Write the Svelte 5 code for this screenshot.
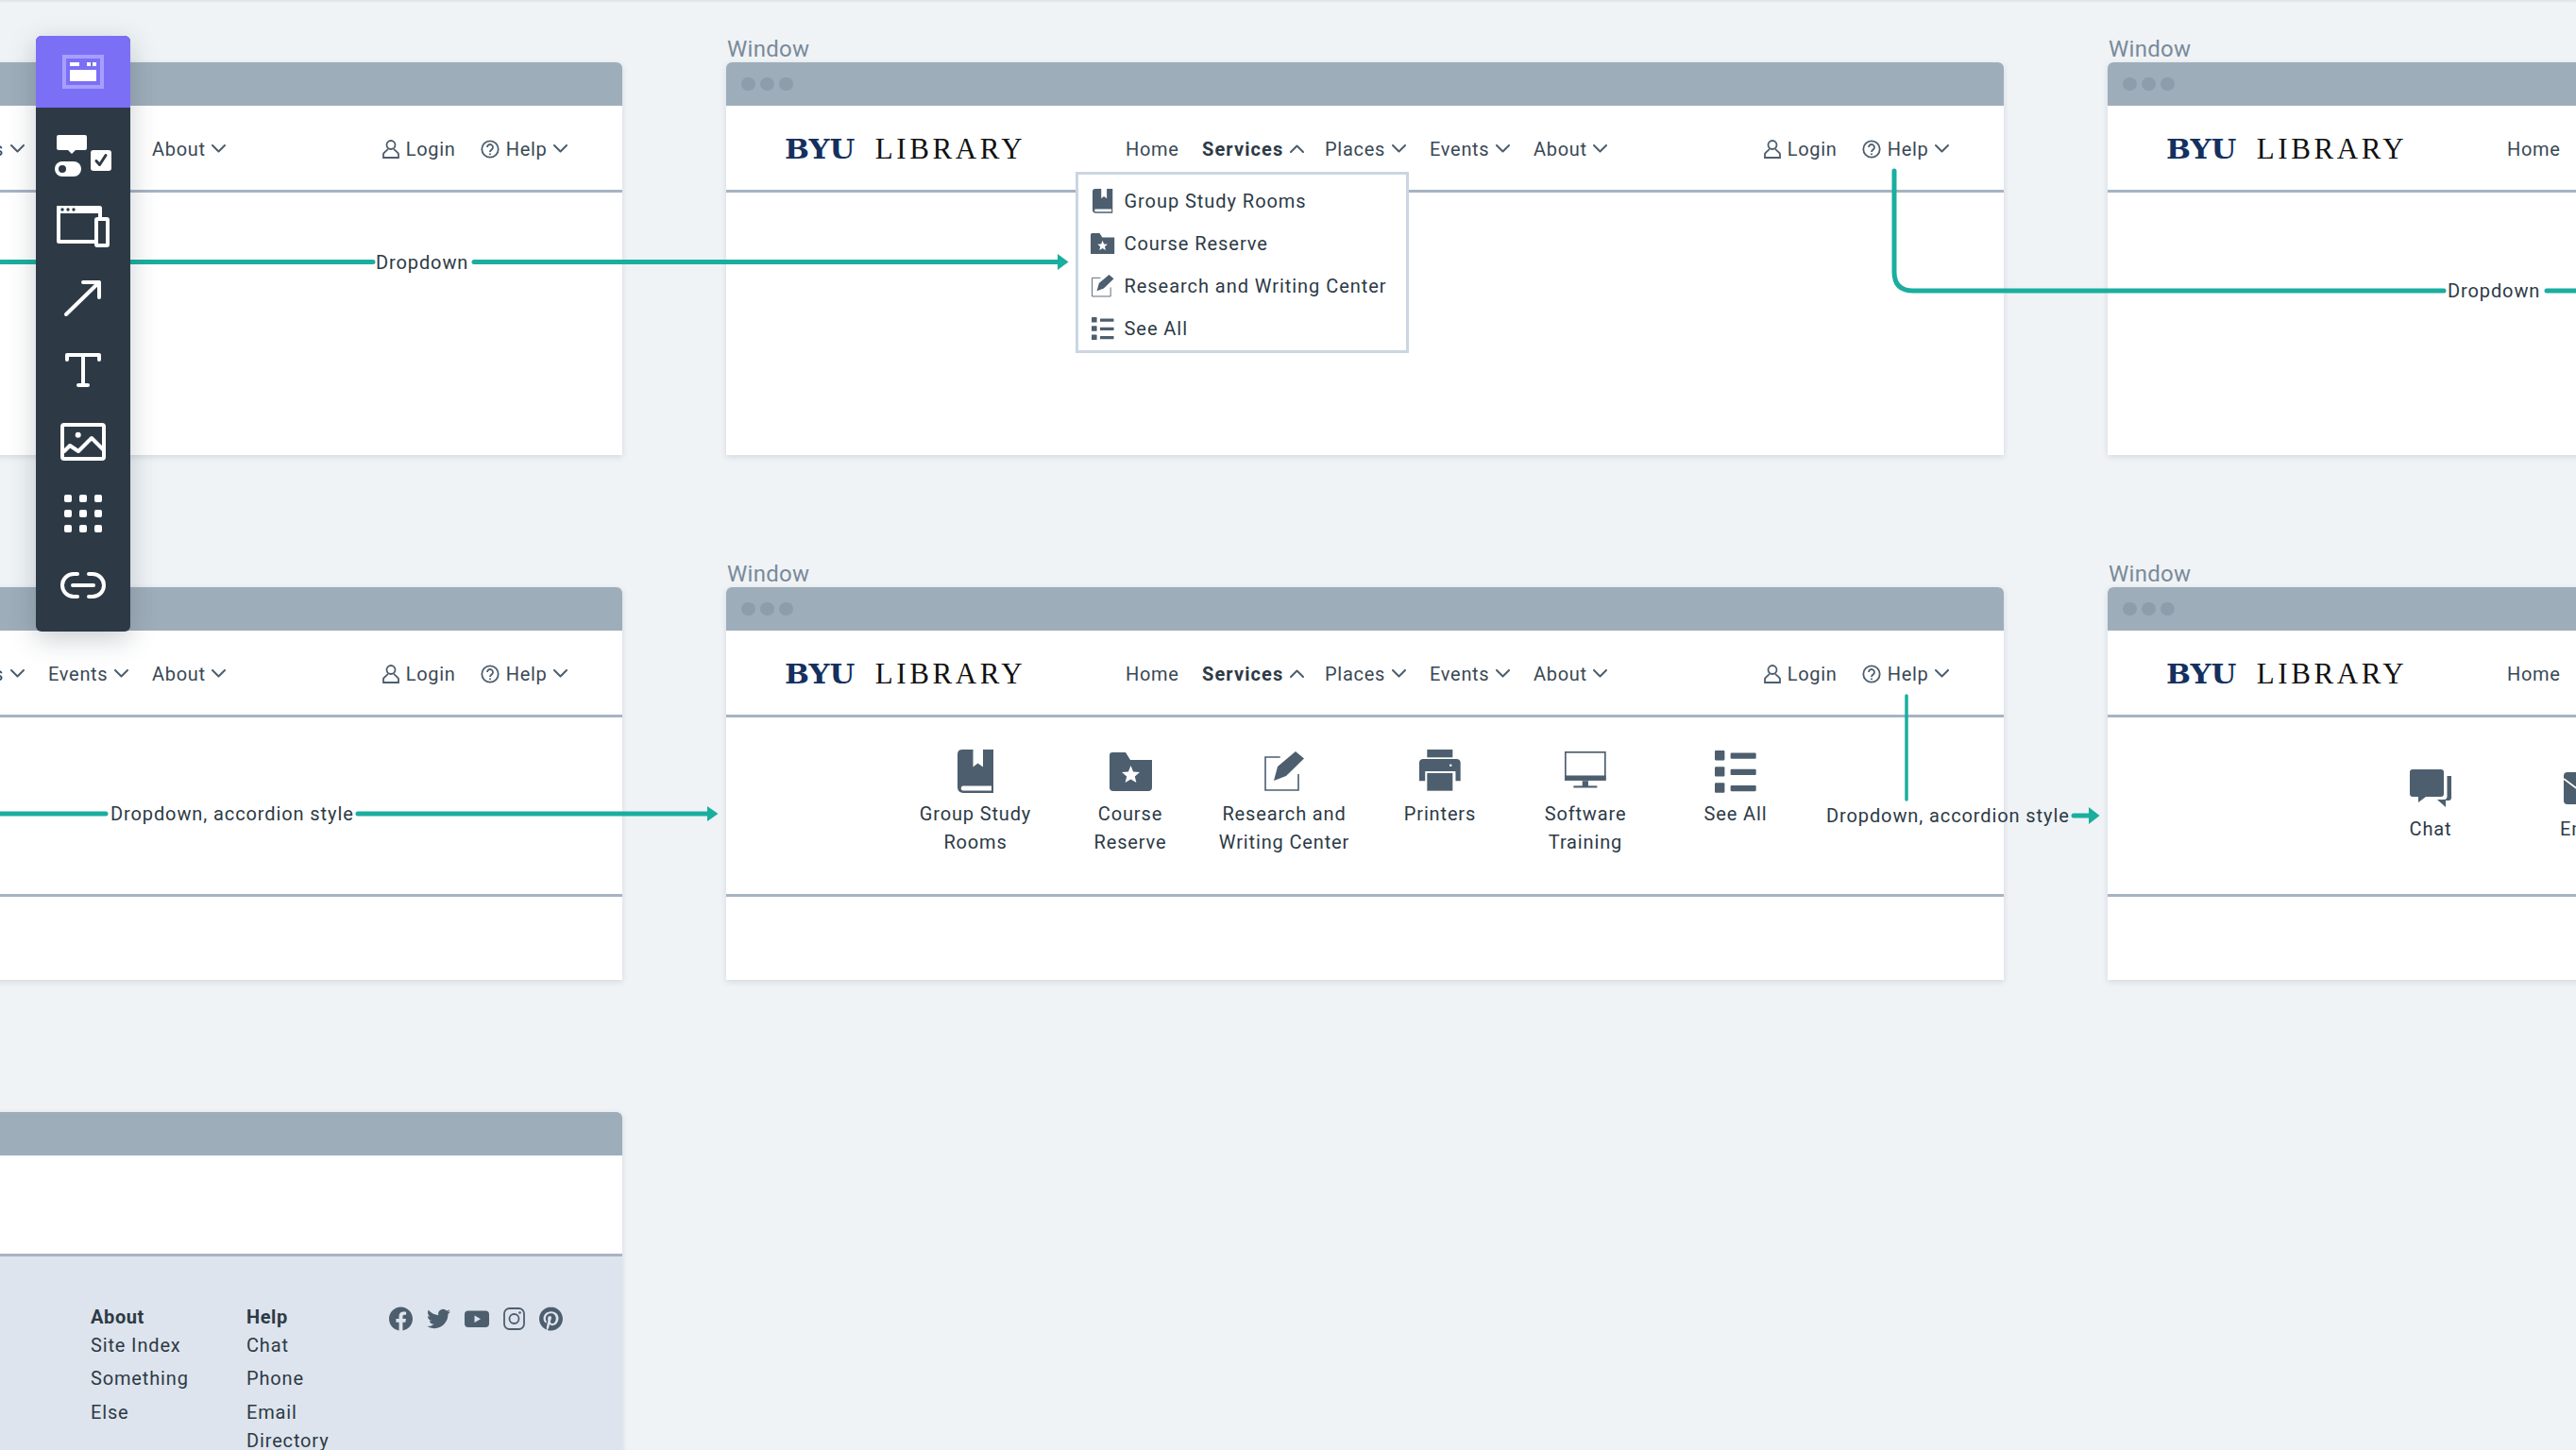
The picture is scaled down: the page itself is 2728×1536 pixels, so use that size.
<script>
  const toolBtns = ['controls', 'device', 'arrow', 'text', 'image', 'grid', 'link'];
  const fullMenu = [
    { icon: 'book', top: 0, s: 1, lines: ['Group Study', 'Rooms'], label: 'Group Study Rooms' },
    { icon: 'folder', top: 3, s: 1, lines: ['Course', 'Reserve'], label: 'Course Reserve' },
    { icon: 'edit', top: 2, s: 1, lines: ['Research and', 'Writing Center'], label: 'Research and Writing Center' },
    { icon: 'printer', top: 0, s: 1.04, lines: ['Printers'] },
    { icon: 'monitor', top: 2, s: 1.04, lines: ['Software', 'Training'] },
    { icon: 'list', top: 1, s: 1.04, lines: ['See All'], label: 'See All' }
  ];
  const dropItems = fullMenu.filter((m) => m.label);
  const sizes = {
    book: [38, 46], folder: [45, 41], edit: [42, 42], printer: [42, 42], monitor: [42, 38], list: [42, 43],
    chat: [44, 40], mail: [46, 34]
  };
  const windows = [
    { x: -694, y: 66, kind: 'plain' },
    { x: 769, y: 66, kind: 'drop', active: true, label: true },
    { x: 2232, y: 66, kind: 'plain', label: true },
    { x: -694, y: 622, kind: 'panelEmpty', active: true },
    { x: 769, y: 622, kind: 'panel', active: true, label: true },
    { x: 2232, y: 622, kind: 'help', label: true }
  ];
  const footCols = [
    { title: 'About', links: ['Site Index', 'Something', 'Else'] },
    { title: 'Help', links: ['Chat', 'Phone', 'Email', 'Directory'] }
  ];
</script>

{#snippet icon(name, scale = 1)}
  <svg class="ico" width={sizes[name][0] * scale} height={sizes[name][1] * scale} viewBox="0 0 {sizes[name][0]} {sizes[name][1]}">
    {#if name === 'book'}
      <path d="M5 0H16.5V18.5L21.5 14.5L27 18.5V0H38V46H6C2 46 0 43 0 40V5C0 2 2 0 5 0Z" />
      <path class="cut" d="M6 38.5H36V43.5H6C3 43.5 3 38.5 6 38.5Z" />
    {:else if name === 'folder'}
      <path d="M3 0H17L22 8H45V37a4 4 0 0 1-4 4H4a4 4 0 0 1-4-4V3a3 3 0 0 1 3-3Z" />
      <polygon class="cut" points="22.5,14 25.1,20.4 32,21 26.8,25.4 28.4,32 22.5,28.4 16.6,32 18.2,25.4 13,21 19.9,20.4" />
    {:else if name === 'edit'}
      <path class="line" d="M16.7 6H1V41H36V24" />
      <polygon points="10,31 14,16 33,0 42,7.5 23,26" />
    {:else if name === 'printer'}
      <rect x="8" width="26" height="8" />
      <path d="M4 9.5H38a4 4 0 0 1 4 4V32H37V22H6V32H0V13.5a4 4 0 0 1 4-4Z" />
      <rect x="8" y="24" width="26" height="18" />
      <circle class="cut" cx="32" cy="16" r="1.2" />
    {:else if name === 'monitor'}
      <rect class="line" x="0.8" y="0.8" width="40.4" height="28" />
      <rect y="24.5" width="42" height="5" />
      <rect x="18" y="30" width="6" height="6" />
      <rect x="9" y="35" width="24" height="2" />
    {:else if name === 'list'}
      <rect width="10" height="10" rx="1" /><rect y="16.5" width="10" height="10" rx="1" /><rect y="33" width="10" height="10" rx="1" />
      <rect x="16" y="2.5" width="26" height="6" rx="1" /><rect x="16" y="19" width="26" height="6" rx="1" /><rect x="16" y="35.5" width="26" height="6" rx="1" />
    {:else if name === 'chat'}
      <path d="M3 0H33a3 3 0 0 1 3 3V26a3 3 0 0 1-3 3H17L9 35V29H3a3 3 0 0 1-3-3V3a3 3 0 0 1 3-3Z" />
      <path d="M39.5 7H44V30a3 3 0 0 1-3 3H38V40L29 32H36a3.500 3.500 0 0 0 3.500-3.500Z" />
    {:else if name === 'mail'}
      <rect width="46" height="34" rx="4" />
      <path class="cutline" d="M0 7L23 24L46 7" />
    {/if}
  </svg>
{/snippet}

{#snippet chev(up = false)}
  <svg class="chev" width="15" height="9" viewBox="0 0 15 9">
    <path d={up ? 'M1 8L7.500 1.500L14 8' : 'M1 1L7.500 7.500L14 1'} />
  </svg>
{/snippet}

{#snippet nav(active)}
  <div class="nav">
    <div class="logo"><span class="byu">BYU</span><span class="lib">LIBRARY</span></div>
    <span class="item">Home</span>
    <span class="item" class:on={active}>Services {@render chev(active)}</span>
    <span class="item">Places {@render chev()}</span>
    <span class="item">Events {@render chev()}</span>
    <span class="item">About {@render chev()}</span>
    <span class="item">
      <svg class="nico" width="18" height="20" viewBox="0 0 18 20"><circle cx="9" cy="5.500" r="4.500" /><path d="M6 9.500C5 12 1 13 1 15.500V19H17V15.500C17 13 13 12 12 9.500" /></svg>
      Login
    </span>
    <span class="item">
      <svg class="nico" width="20" height="20" viewBox="0 0 20 20"><circle cx="10" cy="10" r="8.700" /><path d="M7 8a3 3 0 1 1 4.500 2.600C10.500 11.200 10 11.800 10 13" /><circle class="dot" cx="10" cy="15.300" r="1" /></svg>
      Help {@render chev()}
    </span>
  </div>
{/snippet}

{#snippet titlebar(dots)}
  <div class="bar">
    {#if dots}<i></i><i></i><i></i>{/if}
  </div>
{/snippet}

<main class="stage">
  {#each windows as w}
    <section class="win" style="left:{w.x}px;top:{w.y}px">
      {#if w.label}<div class="wlabel">Window</div>{/if}
      {@render titlebar(true)}
      {@render nav(w.active)}
      {#if w.kind === 'drop'}
        <ul class="drop">
          {#each dropItems as m}
            <li><span class="dicon">{@render icon(m.icon, 0.56)}</span>{m.label}</li>
          {/each}
        </ul>
      {:else if w.kind === 'panel'}
        <div class="panel">
          {#each fullMenu as m}
            <div class="cell">
              <div class="cicon"><span style="margin-top:{m.top}px">{@render icon(m.icon, m.s)}</span></div>
              {#each m.lines as l}<div>{l}</div>{/each}
            </div>
          {/each}
        </div>
      {:else if w.kind === 'panelEmpty'}
        <div class="panel"></div>
      {:else if w.kind === 'help'}
        <div class="panel short">
          <div class="cell"><div class="cicon">{@render icon('chat')}</div><div>Chat</div></div>
          <div class="cell"><div class="cicon"><span class="mailtop">{@render icon('mail')}</span></div><div>Email</div></div>
        </div>
      {/if}
    </section>
  {/each}

  <section class="win tall" style="left:-694px;top:1178px">
    {@render titlebar(false)}
    <div class="blank"></div>
    <footer class="foot">
      {#each footCols as c}
        <div class="fcol">
          <strong>{c.title}</strong>
          {#each c.links as l}<span class:tight={l === 'Directory'}>{l}</span>{/each}
        </div>
      {/each}
      <div class="social">
        <svg width="25" height="26" viewBox="0 0 24 24"><path d="M24 12.073c0-6.627-5.373-12-12-12s-12 5.373-12 12c0 5.990 4.388 10.954 10.125 11.854v-8.385H7.078v-3.470h3.047V9.430c0-3.007 1.792-4.669 4.533-4.669 1.312 0 2.686.235 2.686.235v2.953H15.830c-1.491 0-1.956.925-1.956 1.874v2.250h3.328l-.532 3.470h-2.796v8.385C19.612 23.027 24 18.062 24 12.073z" /></svg>
        <svg width="25" height="26" viewBox="0 0 24 24"><path d="M23.953 4.570a10 10 0 01-2.825.775 4.958 4.958 0 002.163-2.723c-.951.555-2.005.959-3.127 1.184a4.920 4.920 0 00-8.384 4.482C7.690 8.095 4.067 6.130 1.640 3.162a4.822 4.822 0 00-.666 2.475c0 1.710.870 3.213 2.188 4.096a4.904 4.904 0 01-2.228-.616v.060a4.923 4.923 0 003.946 4.827 4.996 4.996 0 01-2.212.085 4.936 4.936 0 004.604 3.417 9.867 9.867 0 01-6.102 2.105c-.390 0-.779-.023-1.170-.067a13.995 13.995 0 007.557 2.209c9.053 0 13.998-7.496 13.998-13.985 0-.210 0-.420-.015-.630A9.935 9.935 0 0024 4.590z" /></svg>
        <svg width="26" height="26" viewBox="0 0 26 26"><rect y="4.500" width="26" height="17.500" rx="4" /><polygon class="cutf" points="10.500,9.500 17,13.200 10.500,17" /></svg>
        <svg width="23" height="26" viewBox="0 0 23 26"><rect class="ln" x="1" y="2" width="21" height="22" rx="5.500" /><circle class="ln" cx="11.500" cy="13" r="5" /><circle cx="17.500" cy="6.500" r="1.300" /></svg>
        <svg width="25" height="26" viewBox="0 0 24 24"><path d="M12.017 0C5.396 0 .029 5.367.029 11.987c0 5.079 3.158 9.417 7.618 11.162-.105-.949-.199-2.403.041-3.439.219-.937 1.406-5.957 1.406-5.957s-.359-.720-.359-1.781c0-1.663.967-2.911 2.168-2.911 1.024 0 1.518.769 1.518 1.688 0 1.029-.653 2.567-.992 3.992-.285 1.193.600 2.165 1.775 2.165 2.128 0 3.768-2.245 3.768-5.487 0-2.861-2.063-4.869-5.008-4.869-3.410 0-5.409 2.562-5.409 5.199 0 1.033.394 2.143.889 2.741.099.120.112.225.085.345-.090.375-.293 1.199-.334 1.363-.053.225-.172.271-.401.165-1.495-.690-2.433-2.878-2.433-4.646 0-3.776 2.748-7.252 7.920-7.252 4.158 0 7.392 2.967 7.392 6.923 0 4.135-2.607 7.462-6.233 7.462-1.214 0-2.354-.629-2.758-1.379l-.749 2.848c-.269 1.045-1.004 2.352-1.498 3.146 1.123.345 2.306.535 3.550.535 6.607 0 11.985-5.365 11.985-11.987C23.970 5.390 18.592.026 11.985.026L12.017 0z" /></svg>
      </div>
    </footer>
  </section>

  <svg class="wires" width="2728" height="1536" viewBox="0 0 2728 1536">
    <path d="M-4 277.500H395M502 277.500H1122" />
    <polygon points="1120,269 1131.500,277.500 1120,286" />
    <path d="M2006 181V288Q2006 308 2026 308H2588M2697 308H2732" />
    <path d="M-4 862H112M379 862H752" />
    <polygon points="749,854 760.500,862 749,870" />
    <path class="thin" d="M2019 737V847" />
    <path d="M2196 864H2214" />
    <polygon points="2212,855 2223.500,864 2212,873" />
  </svg>
  <span class="wlab" style="left:398px;top:277.500px">Dropdown</span>
  <span class="wlab" style="left:2592px;top:308px">Dropdown</span>
  <span class="wlab" style="left:117px;top:862px">Dropdown, accordion style</span>
  <span class="wlab" style="left:1934px;top:864px">Dropdown, accordion style</span>

  <aside class="tools">
    <div class="tool head">
      <svg width="100" height="76" viewBox="0 0 100 76">
        <rect x="30" y="22" width="40" height="32" fill="none" stroke="#a79fff" stroke-width="4" />
        <rect x="36" y="28" width="10" height="4" fill="#fff" /><rect x="54" y="28" width="4" height="4" fill="#fff" /><rect x="60" y="28" width="4" height="4" fill="#fff" /><rect x="36" y="36" width="28" height="12" fill="#fff" />
      </svg>
    </div>
    <div class="list">
      {#each toolBtns as t}
        <svg class="tool" width="100" height="76" viewBox="0 0 100 76">
          {#if t === 'controls'}
            <path class="f" d="M24 17H52a2 2 0 0 1 2 2V31a2 2 0 0 1-2 2H42L38 37L34 33H24a2 2 0 0 1-2-2V19a2 2 0 0 1 2-2Z" />
            <rect class="f" x="20" y="45" width="28" height="16" rx="8" /><circle class="d" cx="28" cy="53" r="4" />
            <rect class="f" x="58" y="33" width="22" height="22" rx="3" /><path class="dl" d="M64 44.500L67.500 48.500L74 38.500" />
          {:else if t === 'device'}
            <rect class="f" x="22" y="16" width="46" height="8" rx="1" />
            <rect class="s" x="24" y="18" width="44" height="36" rx="0.500" />
            <circle class="d" cx="28" cy="20" r="1.700" /><circle class="d" cx="34" cy="20" r="1.700" /><circle class="d" cx="40" cy="20" r="1.700" />
            <rect class="s bg" x="64" y="30" width="12" height="28" rx="1" />
          {:else if t === 'arrow'}
            <path class="s" d="M32 55L67 21M50 21H67V37" />
          {:else if t === 'text'}
            <path class="s" d="M33 27V22H67V27M50 22V54M45 54H55" />
          {:else if t === 'image'}
            <rect class="s" x="28" y="20" width="44" height="36" rx="2" />
            <circle class="f" cx="44.700" cy="30.700" r="3" />
            <path class="s" d="M30 48L36 42L45 48L59 34L71 46" />
          {:else if t === 'grid'}
            {#each [18, 34, 50] as y}
              {#each [30, 46, 62] as x}<rect class="f" {x} {y} width="8" height="8" rx="2" />{/each}
            {/each}
          {:else if t === 'link'}
            <path class="s" d="M44 26H40a12 12 0 0 0 0 24H44M56 26H60a12 12 0 0 1 0 24H56M39 38H61" />
          {/if}
        </svg>
      {/each}
    </div>
  </aside>
</main>

<style>
  :global(body) { margin: 0; overflow: hidden; background: #eff3f6; }
  .stage {
    position: relative; width: 2728px; height: 1536px; overflow: hidden;
    background: #eff3f6; color: #2d3a46;
    box-shadow: inset 0 3px 2px -1px rgba(0,0,0,.06);
    font-family: Roboto, "Liberation Sans", sans-serif; font-size: 20px;
  }
  .win {
    position: absolute; width: 1353px; height: 416px; display: flex; flex-direction: column;
    background: #fff; border-radius: 6px 6px 0 0;
    box-shadow: 0 2px 6px rgba(45,58,70,.14);
  }
  .win.tall { height: 420px; }
  .wlabel { position: absolute; left: 1px; top: -30px; font-size: 24px; line-height: 32px; color: #7b8a99; letter-spacing: .3px; }
  .bar {
    height: 46px; flex: none; background: #9eadba; border-radius: 6px 6px 0 0;
    display: flex; align-items: center; gap: 5.500px; padding-left: 16px;
  }
  .bar i { width: 14.500px; height: 14.500px; border-radius: 50%; background: #8d9dac; }
  .nav {
    display: grid; grid-template-columns: 361px 81px 130px 111px 110px 244px 104px auto;
    align-items: center; flex: none; padding: 2px 0 0 62px; height: 87px;
    border-bottom: 3px solid #a6b3c2; box-sizing: content-box;
  }
  .logo { display: flex; align-items: center; gap: 27px; color: #000; }
  .byu { font: 700 28.500px "DejaVu Serif", serif; color: #14305f; letter-spacing: 0; transform: scaleX(1.08); transform-origin: left; }
  .lib { font: 400 31px "Liberation Serif", serif; letter-spacing: 3.600px; color: #111; }
  .item { display: flex; align-items: center; white-space: pre; color: #3a4855; letter-spacing: .7px; line-height: 24px; font-size: 20px; }
  .item.on { font-weight: 700; color: #2d3a46; letter-spacing: 1.1px; }
  .chev { margin-left: 1px; }
  .chev path { fill: none; stroke: #4d5e6e; stroke-width: 2; stroke-linecap: round; stroke-linejoin: round; }
  .nico { margin-right: 1px; }
  .nico circle, .nico path { fill: none; stroke: #4d5e6e; stroke-width: 1.800; }
  .nico .dot { fill: #4d5e6e; stroke: none; }
  .ico { display: block; fill: #4d5e6e; }
  .ico .cut { fill: #fff; }
  .ico .line { fill: none; stroke: #4d5e6e; stroke-width: 1.600; }
  .ico .cutline { fill: none; stroke: #fff; stroke-width: 1.800; }

  .drop {
    position: absolute; left: 370px; top: 116px; width: 353px; height: 192px; margin: 0; padding: 5.500px 0;
    box-sizing: border-box; list-style: none; background: #fff; border: 3px solid #cbd6e2;
  }
  .drop li { display: flex; align-items: center; height: 45px; padding-left: 12px; letter-spacing: .95px; color: #2d3a46; }
  .dicon { display: flex; justify-content: center; width: 28px; margin-right: 8.500px; flex: none; }

  .panel {
    display: grid; grid-template-columns: 168px 160px 166px 164px 144px 174px; align-items: start;
    height: 190px; flex: none; box-sizing: border-box; padding: 34px 0 0 180px; line-height: 30px;
    border-bottom: 3px solid #a6b3c2; letter-spacing: .85px; text-align: center; color: #2d3a46;
  }
  .panel.short { grid-template-columns: 164px 164px; padding: 55px 0 0 260px; }
  .cicon { height: 53px; display: flex; justify-content: center; align-items: flex-start; }
  .panel.short .cicon { height: 48px; }
  .mailtop { margin-top: 3px; }
  .blank { height: 103.500px; flex: none; border-bottom: 3px solid #a6b3c2; }
  .foot {
    flex: 1; background: #dee4ed; display: flex; padding: 49px 0 0 790px; overflow: hidden;
    letter-spacing: .85px; color: #2d3a46;
  }
  .fcol { width: 165px; display: flex; flex-direction: column; line-height: 30px; }
  .fcol strong { letter-spacing: .6px; }
  .fcol span + span { margin-top: 5.500px; }
  .fcol span.tight { margin-top: 0; }
  .social { display: flex; gap: 15px; margin-left: -14px; height: 26px; margin-top: 4px; fill: #4d5e6e; }
  .social svg { display: block; }
  .social .cutf { fill: #dee4ed; }
  .social .ln { fill: none; stroke: #4d5e6e; stroke-width: 1.800; }

  .wires { position: absolute; left: 0; top: 0; pointer-events: none; }
  .wires path { fill: none; stroke: #1aae9f; stroke-width: 5; stroke-linecap: round; }
  .wires path.thin { stroke-width: 3.500; }
  .wires polygon { fill: #1aae9f; }
  .wlab { position: absolute; transform: translateY(-50%); line-height: 24px; letter-spacing: .9px; white-space: nowrap; color: #2d3a46; }

  .tools {
    position: absolute; left: 38px; top: 38px; width: 100px; border-radius: 6px; overflow: hidden;
    background: #2d3a46; box-shadow: 0 8px 28px rgba(45,58,70,.25);
  }
  .tool { display: block; }
  .head { height: 76px; background: #7b6ff5; }
  .head svg { display: block; }
  .list { padding: 11.500px 0 11.500px; }
  .f { fill: #fff; }
  .d { fill: #2d3a46; }
  .dl { fill: none; stroke: #2d3a46; stroke-width: 3; stroke-linecap: round; stroke-linejoin: round; }
  .s { fill: none; stroke: #fff; stroke-width: 4; stroke-linecap: round; stroke-linejoin: round; }
  .s.bg { fill: #2d3a46; }
</style>
